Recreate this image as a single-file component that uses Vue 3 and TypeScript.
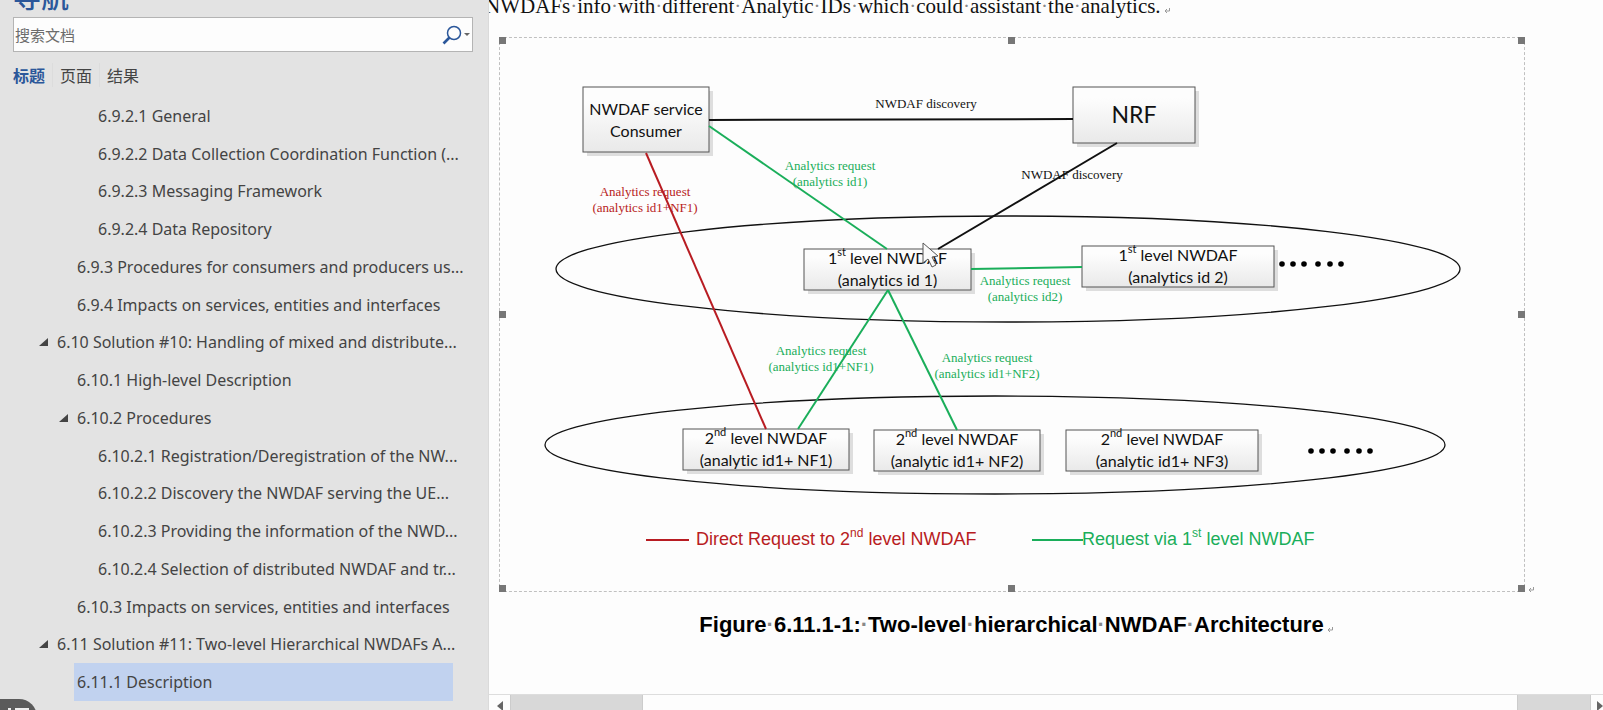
<script setup lang="ts">
import { ref } from 'vue'

interface Heading { text: string; level: number; open?: boolean }
interface Line { x1: number; y1: number; x2: number; y2: number; kind: string }
interface Label { x: number; y: number; kind: string; lines: string[] }
interface Box { x: number; y: number; w: number; h: number; ord: string; sup: string; second: string; base: number }

const query = ref('')
const tabs = ['标题', '页面', '结果']
const activeTab = ref('标题')
const selected = ref('6.11.1 Description')

const headings: Heading[] = [
  { text: '6.9.2.1 General', level: 4 },
  { text: '6.9.2.2 Data Collection Coordination Function (...', level: 4 },
  { text: '6.9.2.3 Messaging Framework', level: 4 },
  { text: '6.9.2.4 Data Repository', level: 4 },
  { text: '6.9.3 Procedures for consumers and producers us...', level: 3 },
  { text: '6.9.4 Impacts on services, entities and interfaces', level: 3 },
  { text: '6.10 Solution #10: Handling of mixed and distribute...', level: 2, open: true },
  { text: '6.10.1 High-level Description', level: 3 },
  { text: '6.10.2 Procedures', level: 3, open: true },
  { text: '6.10.2.1 Registration/Deregistration of the NW...', level: 4 },
  { text: '6.10.2.2 Discovery the NWDAF serving the UE...', level: 4 },
  { text: '6.10.2.3 Providing the information of the NWD...', level: 4 },
  { text: '6.10.2.4 Selection of distributed NWDAF and tr...', level: 4 },
  { text: '6.10.3 Impacts on services, entities and interfaces', level: 3 },
  { text: '6.11 Solution #11: Two-level Hierarchical NWDAFs A...', level: 2, open: true },
  { text: '6.11.1 Description', level: 3 },
]

const bodyWords = 'NWDAFs info with different Analytic IDs which could assistant the analytics.'.split(' ')
const captionWords = 'Figure 6.11.1-1: Two-level hierarchical NWDAF Architecture'.split(' ')

const lines: Line[] = [
  { x1: 210, y1: 83, x2: 574, y2: 82, kind: 'black' },
  { x1: 618, y1: 106, x2: 439, y2: 212, kind: 'black' },
  { x1: 210, y1: 89, x2: 388, y2: 212, kind: 'green' },
  { x1: 472, y1: 232, x2: 583, y2: 230, kind: 'green' },
  { x1: 389, y1: 253, x2: 299, y2: 392, kind: 'green' },
  { x1: 389, y1: 253, x2: 458, y2: 393, kind: 'green' },
  { x1: 147, y1: 116, x2: 267, y2: 392, kind: 'red' },
]

const labels: Label[] = [
  { x: 427, y: 71, kind: 'black', lines: ['NWDAF discovery'] },
  { x: 573, y: 142, kind: 'black', lines: ['NWDAF discovery'] },
  { x: 331, y: 133, kind: 'green', lines: ['Analytics request', '(analytics id1)'] },
  { x: 146, y: 159, kind: 'red', lines: ['Analytics request', '(analytics id1+NF1)'] },
  { x: 526, y: 248, kind: 'green', lines: ['Analytics request', '(analytics id2)'] },
  { x: 322, y: 318, kind: 'green', lines: ['Analytics request', '(analytics id1+NF1)'] },
  { x: 488, y: 325, kind: 'green', lines: ['Analytics request', '(analytics id1+NF2)'] },
]

const boxes: Box[] = [
  { x: 305, y: 212, w: 167, h: 41, ord: '1', sup: 'st', second: '(analytics id 1)', base: 227 },
  { x: 583, y: 209, w: 192, h: 41, ord: '1', sup: 'st', second: '(analytics id 2)', base: 224 },
  { x: 184, y: 392, w: 166, h: 41, ord: '2', sup: 'nd', second: '(analytic id1+ NF1)', base: 407 },
  { x: 375, y: 393, w: 166, h: 41, ord: '2', sup: 'nd', second: '(analytic id1+ NF2)', base: 408 },
  { x: 567, y: 393, w: 192, h: 41, ord: '2', sup: 'nd', second: '(analytic id1+ NF3)', base: 408 },
]

const dotOffsets = [0, 11, 22, 36, 48, 59]
const dotRows = [{ x: 783, y: 227 }, { x: 812, y: 414 }]
const handles = ['nw', 'n', 'ne', 'w', 'e', 'sw', 's', 'se']
</script>

<template>
  <div class="app">
    <aside class="nav">
      <h2 class="nav-title">导航</h2>
      <form class="search" @submit.prevent>
        <input v-model="query" type="text" placeholder="搜索文档" aria-label="搜索文档" />
        <button type="submit" class="search-go" aria-label="搜索">
          <svg width="28" height="20" viewBox="0 0 28 20">
            <circle cx="12" cy="8" r="6.5" fill="none" stroke="#2b579a" stroke-width="1.5" />
            <path d="M7.5 12.5 L1.5 18.5" stroke="#2b579a" stroke-width="2.6" fill="none" />
            <path d="M22 8 h6 l-3 3z" fill="#666" />
          </svg>
        </button>
      </form>
      <div class="tabs" role="tablist">
        <button
          v-for="t in tabs" :key="t" type="button" role="tab"
          :aria-selected="t === activeTab" :class="{ active: t === activeTab }" @click="activeTab = t"
        >{{ t }}</button>
      </div>
      <ul class="tree">
        <li v-for="h in headings" :key="h.text" :class="'level-' + h.level">
          <svg v-if="h.open" class="twisty" width="9" height="8" viewBox="0 0 9 8"><path d="M9 0 V8 H0z" fill="#444" /></svg>
          <a href="#" :class="{ selected: h.text === selected }" @click.prevent="selected = h.text">{{ h.text }}</a>
        </li>
      </ul>
      <button type="button" class="pill" aria-label="列表">
        <svg width="22" height="12" viewBox="0 0 22 12">
          <path d="M0 1h3M7 1h14M0 6h3M7 6h14" stroke="#eee" stroke-width="2" />
        </svg>
      </button>
    </aside>

    <main class="doc">
      <div class="page">
        <p class="body-line">
          <template v-for="(w, i) in bodyWords" :key="i"><span v-if="i" class="sp">·</span>{{ w }}</template>
          <svg class="mark" width="6" height="5" viewBox="0 0 6 5"><path d="M5.500 0V3H1M3 1L1 3l2 2" /></svg>
        </p>

        <figure>
          <div class="frame">
            <svg class="diagram" viewBox="0 0 1026 555" role="img" aria-label="NWDAF">
              <defs>
                <linearGradient id="face" x1="0" y1="0" x2="0" y2="1">
                  <stop offset="0.2" stop-color="#fdfdfd" />
                  <stop offset="1" stop-color="#e9e9e9" />
                </linearGradient>
              </defs>
              <ellipse cx="509" cy="232" rx="452" ry="53" class="zone" />
              <ellipse cx="496" cy="408" rx="450" ry="49" class="zone" />

              <g class="labels">
                <text v-for="(l, i) in labels" :key="i" :class="l.kind">
                  <tspan v-for="(s, j) in l.lines" :key="j" :x="l.x" :y="l.y + j * 16">{{ s }}</tspan>
                </text>
              </g>

              <g class="boxes">
                <rect x="88" y="54" width="126" height="65" class="shadow" />
                <rect x="84" y="50" width="126" height="65" class="face" />
                <text x="147" y="78">NWDAF service</text>
                <text x="147" y="100">Consumer</text>
                <rect x="578" y="54" width="122" height="56" class="shadow" />
                <rect x="574" y="50" width="122" height="56" class="face" />
                <text x="635" y="86" class="big">NRF</text>
                <template v-for="(b, i) in boxes" :key="i">
                  <rect :x="b.x + 4" :y="b.y + 4" :width="b.w" :height="b.h" class="shadow" />
                  <rect :x="b.x" :y="b.y" :width="b.w" :height="b.h" class="face" />
                  <text :x="b.x + b.w / 2" :y="b.base">{{ b.ord }}<tspan class="sup" dy="-8">{{ b.sup }}</tspan><tspan dy="8">{{ ' level NWDAF' }}</tspan></text>
                  <text :x="b.x + b.w / 2" :y="b.base + 22">{{ b.second }}</text>
                </template>
              </g>

              <line v-for="(l, i) in lines" :key="i" :x1="l.x1" :y1="l.y1" :x2="l.x2" :y2="l.y2" :class="['wire', l.kind]" />

              <g v-for="(r, i) in dotRows" :key="i">
                <circle v-for="d in dotOffsets" :key="d" :cx="r.x + d" :cy="r.y" r="2.8" />
              </g>

              <g class="legend">
                <line x1="147" y1="503" x2="190" y2="503" class="wire red" />
                <text x="197" y="508" class="red">Direct Request to 2<tspan class="lsup" dy="-8">nd</tspan><tspan dy="8">{{ ' level NWDAF' }}</tspan></text>
                <line x1="533" y1="503" x2="584" y2="503" class="wire green" />
                <text x="583" y="508" class="green">Request via 1<tspan class="lsup" dy="-8">st</tspan><tspan dy="8">{{ ' level NWDAF' }}</tspan></text>
              </g>

              <path class="pointer" d="M424 206 V226 L429 222 L433 230 L437 228 L433 220 L439 219z" />
            </svg>
            <i v-for="h in handles" :key="h" :class="['handle', h]"></i>
            <svg class="mark frame-mark" width="6" height="5" viewBox="0 0 6 5"><path d="M5.500 0V3H1M3 1L1 3l2 2" /></svg>
          </div>
          <figcaption>
            <template v-for="(w, i) in captionWords" :key="i"><span v-if="i" class="sp">·</span>{{ w }}</template>
            <svg class="mark" width="6" height="5" viewBox="0 0 6 5"><path d="M5.500 0V3H1M3 1L1 3l2 2" /></svg>
          </figcaption>
        </figure>
      </div>

      <div class="hscroll">
        <button type="button" aria-label="向左滚动"><svg width="6" height="10" viewBox="0 0 6 10"><path d="M6 0V10L0 5z" fill="#666" /></svg></button>
        <div class="track"><div class="thumb"></div></div>
        <button type="button" class="right" aria-label="向右滚动"><svg width="6" height="10" viewBox="0 0 6 10"><path d="M0 0V10L6 5z" fill="#666" /></svg></button>
      </div>
    </main>
  </div>
</template>

<style>
body { margin: 0; background: #fdfdfd; }
</style>

<style scoped>
* { box-sizing: border-box; }
button { border: 0; padding: 0; background: none; font: inherit; color: inherit; }
.app { display: flex; height: 100vh; overflow: hidden; }

.nav {
  position: relative;
  flex: 0 0 489px;
  display: flex;
  flex-direction: column;
  padding: 0 0 9px 13px;
  background: #e3e3e3;
  border-right: 1px solid #dadada;
  color: #444;
  font-family: "Noto Sans", "Noto Sans CJK SC", sans-serif;
  font-size: 16px;
  overflow: hidden;
}
.nav-title {
  display: flex;
  align-items: flex-end;
  height: 17px;
  margin: 0;
  padding-bottom: 4px;
  color: #2b579a;
  font: 500 28px/34px "Noto Sans CJK SC", sans-serif;
}
.search {
  display: flex;
  align-items: center;
  height: 35px;
  margin-right: 15px;
  background: #fdfdfd;
  border: 1px solid #b4b4b4;
}
.search input {
  flex: 1;
  min-width: 0;
  padding: 0 1px;
  border: 0;
  outline: 0;
  background: transparent;
  font: 15px "Noto Sans CJK SC", sans-serif;
  color: #444;
}
.search input::placeholder { color: #6c6c6c; opacity: 1; }
.search-go { display: flex; padding-right: 2px; }
.tabs { display: flex; height: 45px; align-items: center; font: 16px "Noto Sans CJK SC", sans-serif; }
.tabs button { padding-right: 7px; margin-right: 7px; border-right: 1px solid #dcdcdc; }
.tabs button:last-child { border: 0; }
.tabs .active { color: #2b579a; font-weight: 700; }

.tree {
  flex: 1;
  display: grid;
  grid-auto-rows: 1fr;
  margin: 0 35px 0 0;
  padding: 0;
  list-style: none;
}
.tree li { display: flex; align-items: stretch; min-width: 0; }
.tree a {
  flex: 1;
  min-width: 0;
  display: flex;
  align-items: center;
  padding-left: 3px;
  color: #444;
  text-decoration: none;
  white-space: nowrap;
}
.tree .selected { background: #c1d2ef; }
.level-2 { padding-left: 41px; }
.level-3 { padding-left: 61px; }
.level-4 { padding-left: 82px; }
.twisty { flex: none; align-self: center; margin: 0 6px 0 -15px; }
.pill {
  position: absolute;
  left: -20px;
  bottom: -25px;
  width: 57px;
  height: 36px;
  padding: 9px 0 0 28px;
  border-radius: 18px;
  background: #5b5b5b;
  display: flex;
  align-items: flex-start;
}

.doc { flex: 1; min-width: 0; display: flex; flex-direction: column; background: #fdfdfd; }
.page { flex: 1; min-height: 0; overflow: hidden; padding: 0 78px 0 10px; }
.body-line {
  height: 37px;
  margin: -6px 0 6px -14px;
  color: #111;
  font: 21px/24px "Liberation Serif", serif;
  white-space: nowrap;
}
.sp { color: #888; }
.mark { margin-left: 3px; fill: none; stroke: #999; stroke-width: 1; }
figure { margin: 0; }
.frame { position: relative; outline: 1px dashed #c0c0c0; outline-offset: -1px; }
.diagram { display: block; width: 100%; height: auto; }
.handle { position: absolute; width: 7px; height: 7px; background: #777; }
.nw, .n, .ne { top: 0; }
.w, .e { top: calc(50% - 4px); }
.sw, .s, .se { bottom: 0; }
.nw, .w, .sw { left: 0; }
.n, .s { left: calc(50% - 4px); }
.ne, .e, .se { right: 0; }
.frame-mark { position: absolute; left: 100%; bottom: 0; }

.zone { fill: none; stroke: #111; stroke-width: 1.3; }
.wire { stroke-width: 2; }
line.black { stroke: #111; }
line.green { stroke: #1aae5a; }
line.red { stroke: #b81c22; }
text.black { fill: #111; }
text.green { fill: #1aae5a; }
text.red { fill: #b81c22; }
.labels { font: 13px "Liberation Serif", serif; text-anchor: middle; }
.boxes { font: 16px Lato, sans-serif; font-variant-ligatures: none; text-anchor: middle; fill: #111; }
.boxes .big { font-size: 23px; }
.sup { font-size: 11px; }
.shadow { fill: #dedede; }
.face { fill: url(#face); stroke: #555; stroke-width: 1; }
.legend { font: 18px "Liberation Sans", sans-serif; }
.lsup { font-size: 12px; }
.pointer { fill: #fafafa; stroke: #555; stroke-width: 1; }

figcaption {
  padding: 20px 0 0 8px;
  text-align: center;
  color: #000;
  font: 700 22px/26px "Liberation Sans", sans-serif;
}
.hscroll { display: flex; height: 16px; border-top: 1px solid #ddd; background: #fdfdfd; }
.hscroll button { flex: 0 0 22px; display: flex; align-items: center; justify-content: center; padding-top: 6px; border-right: 1px solid #ccc; }
.hscroll .right { flex-basis: 12px; border: 0; justify-content: flex-end; }
.track { flex: 1; padding: 0 72px 0 131px; background: #d8d8d8; border-right: 1px solid #ccc; }
.thumb { height: 100%; background: #fdfdfd; border: solid #ccc; border-width: 0 1px; }
</style>
